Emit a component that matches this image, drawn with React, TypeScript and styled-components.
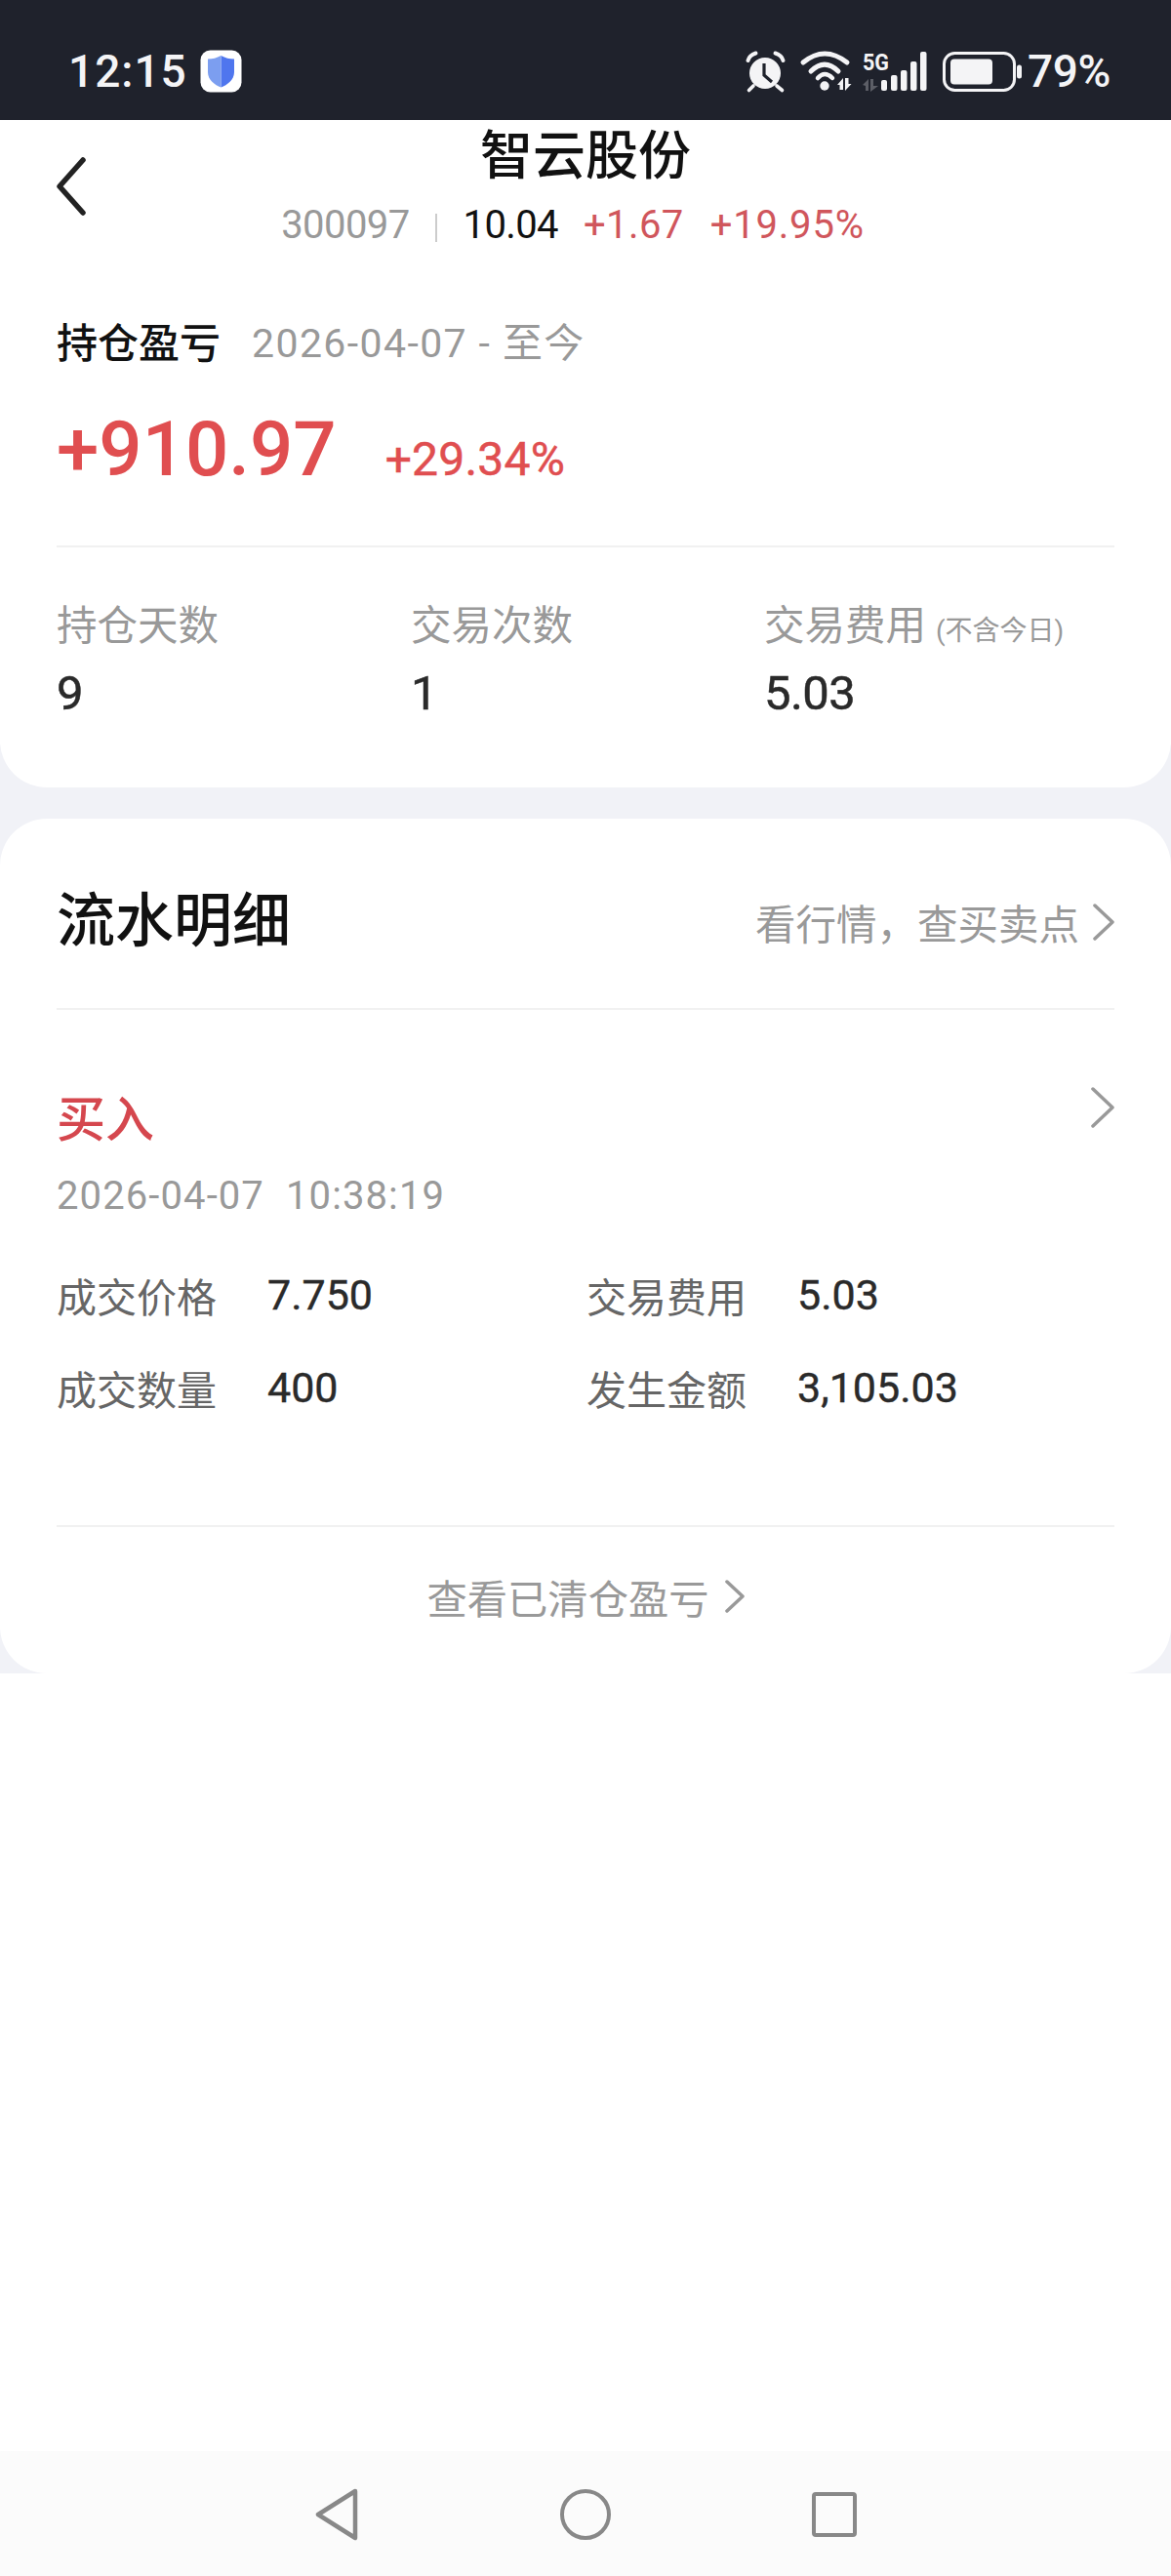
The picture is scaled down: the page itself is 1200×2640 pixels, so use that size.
import React from "react";
import styled, { createGlobalStyle } from "styled-components";

const Global = createGlobalStyle`
  html, body { margin: 0; padding: 0; background: #fff; }
  * { box-sizing: border-box; }
  body { font-family: Roboto, "Noto Sans CJK SC", sans-serif; }
`;

const Page = styled.div`
  width: 1200px;
  height: 2640px;
  display: flex;
  flex-direction: column;
  background: #fff;
  overflow: hidden;
`;

const StatusBar = styled.div`
  height: 123px;
  flex: none;
  background: #1f222c;
  color: #f4f4f6;
  display: flex;
  align-items: center;
  padding: 23px 62px 0 70px;
`;
const StatusText = styled.span`
  font-size: 46px;
  line-height: 50px;
  font-weight: 500;
  letter-spacing: 1px;
`;
const Spacer = styled.div`
  flex: 1;
`;
const ShieldBadge = styled.svg`
  margin-left: 13px;
  display: block;
`;
const StatusIcon = styled.svg<{ $ml: number }>`
  display: block;
  flex: none;
  overflow: visible;
  margin-left: ${(p) => p.$ml}px;
`;
const Percent = styled(StatusText)`
  margin-left: 5px;
  letter-spacing: -0.4px;
`;

const Content = styled.div`
  background: #f1f2f7;
  display: flex;
  flex-direction: column;
  gap: 32px;
  flex: none;
`;
const Card = styled.section<{ $top?: boolean }>`
  background: #fff;
  border-radius: ${(p) => (p.$top ? "0 0 48px 48px" : "48px")};
  padding: 0 58px;
`;

const Header = styled.header`
  display: grid;
  grid-template-columns: 1fr auto 1fr;
  height: 135px;
  margin: 0 -58px;
`;
const BackCell = styled.div`
  padding: 38px 0 0 58px;
`;
const HeaderCenter = styled.div`
  display: flex;
  flex-direction: column;
  align-items: center;
  padding-top: 3px;
`;
const Title = styled.h1`
  margin: 0;
  font-size: 54px;
  line-height: 70px;
  font-weight: 500;
  color: #111;
  height: 70px;
`;
const QuoteRow = styled.div`
  display: flex;
  align-items: center;
  margin-left: -26px;
  margin-top: 13px;
  height: 44px;
  font-size: 40px;
  line-height: 44px;
`;
const Quote = styled.span<{ $color: string; $ml: number; $ls: number }>`
  color: ${(p) => p.$color};
  margin-left: ${(p) => p.$ml}px;
  letter-spacing: ${(p) => p.$ls}px;
`;
const QuoteSep = styled.i`
  width: 2px;
  height: 29px;
  background: #ccc;
  margin: 5px 0 0 26px;
`;

const PnlHead = styled.div`
  display: flex;
  align-items: center;
  margin-top: 62px;
  height: 56px;
`;
const PnlLabel = styled.span`
  font-size: 42px;
  font-weight: 500;
  color: #111;
`;
const PnlDate = styled.span`
  margin-left: 32px;
  font-size: 41px;
  color: #999;
  letter-spacing: 1.4px;
`;
const PnlRow = styled.div`
  display: flex;
  align-items: baseline;
  margin-top: 43px;
  height: 84px;
`;
const PnlValue = styled.span`
  font-size: 78px;
  line-height: 84px;
  font-weight: 500;
  color: #e04e50;
`;
const PnlRate = styled.span`
  margin-left: 50px;
  font-size: 48px;
  font-weight: 400;
  color: #e04e50;
  letter-spacing: 0.2px;
  -webkit-text-stroke: 0.5px #e04e50;
`;
const Divider = styled.div<{ $mt: number }>`
  height: 2px;
  background: #f1f1f1;
  margin-top: ${(p) => p.$mt}px;
`;

const Stats = styled.div`
  display: grid;
  grid-template-columns: 363px 362px 1fr;
  padding: 51px 0 66px;
`;
const Stat = styled.div`
  display: flex;
  flex-direction: column;
`;
const StatLabel = styled.div`
  font-size: 41.5px;
  height: 60px;
  line-height: 60px;
  color: #999;
  white-space: nowrap;
`;
const StatNote = styled.small`
  font-size: 28px;
  line-height: 1;
  margin-left: 10px;
  color: #999;
`;
const StatValue = styled.div`
  font-size: 49px;
  line-height: 60px;
  margin-top: 9px;
  font-weight: 400;
  color: #2a2a2a;
  letter-spacing: -0.6px;
  -webkit-text-stroke: 0.5px #2a2a2a;
`;

const SectionHead = styled.div`
  display: flex;
  align-items: center;
  justify-content: space-between;
  height: 122px;
  margin-top: 45px;
`;
const SectionTitle = styled.h2`
  margin: 0;
  font-size: 60px;
  line-height: 80px;
  font-weight: 500;
  color: #111;
`;
const SectionLink = styled.div`
  display: flex;
  align-items: center;
  font-size: 41.5px;
  color: #999;
`;
const Chevron = styled.svg<{ $ml?: number }>`
  display: block;
  flex: none;
  margin-left: ${(p) => p.$ml ?? 0}px;
`;

const TradeHead = styled.div`
  display: flex;
  justify-content: space-between;
  margin-top: 79px;
  height: 68px;
`;
const TradeType = styled.span`
  font-size: 50px;
  line-height: 68px;
  font-weight: 500;
  color: #d5474e;
`;
const TradeTime = styled.div`
  font-size: 40px;
  line-height: 50px;
  margin-top: 19px;
  color: #999;
  white-space: pre;
  letter-spacing: 1.1px;
`;
const TradeGrid = styled.div`
  display: grid;
  grid-template-columns: 543px 1fr;
  row-gap: 39px;
  margin-top: 48px;
`;
const Field = styled.div`
  display: flex;
  align-items: center;
  height: 56px;
`;
const FieldLabel = styled.span`
  width: 216px;
  font-size: 41px;
  color: #666;
`;
const FieldValue = styled.span`
  font-size: 43px;
  font-weight: 400;
  color: #2a2a2a;
  -webkit-text-stroke: 0.4px #2a2a2a;
`;
const Footer = styled.div`
  display: flex;
  align-items: center;
  justify-content: center;
  height: 150px;
  padding-bottom: 8px;
  font-size: 41.3px;
  color: #999;
`;

const NavBar = styled.nav`
  margin-top: auto;
  height: 128px;
  flex: none;
  background: #fbfbfb;
  display: flex;
  align-items: center;
  justify-content: center;
  padding-top: 2px;
`;
const NavIcon = styled.svg<{ $ml: number }>`
  display: block;
  flex: none;
  margin-left: ${(p) => p.$ml}px;
`;

const FG = "#f4f4f6";

const Shield = () => (
  <ShieldBadge width="43" height="44" viewBox="0 0 43 44">
    <rect x="0.5" y="0.5" width="42" height="43" rx="10" fill="#fff" />
    <path d="M21.5 6 C26 8.5 30 9.5 35 9.5 V23 C35 31 28 36 21.5 38.5 Z" fill="#4f76ee" />
    <path d="M21.5 6 C17 8.5 13 9.5 8 9.5 V23 C8 31 15 36 21.5 38.5 Z" fill="#7c9ef0" />
  </ShieldBadge>
);

const Alarm = () => (
  <StatusIcon $ml={0} width="41" height="42" viewBox="0 0 41 42">
    <path d="M2.5 10 Q4 4.5 10.5 2.5" fill="none" stroke={FG} strokeWidth="4" strokeLinecap="round" />
    <path d="M38.5 10 Q37 4.5 30.5 2.5" fill="none" stroke={FG} strokeWidth="4" strokeLinecap="round" />
    <circle cx="20" cy="23" r="16" fill={FG} />
    <path d="M19 13 V25 L27 32" fill="none" stroke="#1f222c" strokeWidth="3.2" />
    <path d="M8 36 L3.5 40.5 M32 36 L37.5 40.5" stroke={FG} strokeWidth="3.6" strokeLinecap="round" />
  </StatusIcon>
);

const Wifi = () => (
  <StatusIcon $ml={15} width="52" height="41" viewBox="0 0 52 41">
    <path d="M3 11 Q25 -7 48 11" fill="none" stroke={FG} strokeWidth="5" strokeLinecap="round" />
    <path d="M11 20 Q25 6 39 20" fill="none" stroke={FG} strokeWidth="5" strokeLinecap="round" />
    <path d="M18 27 Q25 19 33 27" fill="none" stroke={FG} strokeWidth="4.5" strokeLinecap="round" />
    <circle cx="25" cy="35" r="4.7" fill={FG} />
    <path d="M38 34 L44 27 V39 H40.5 V34 Z M46 27 H49.5 V33 H52.5 L46 40 Z" fill={FG} />
  </StatusIcon>
);

const Signal = () => (
  <StatusIcon $ml={11} width="68" height="40" viewBox="0 0 68 40">
    <text x="1" y="18.5" fontFamily="Roboto" fontWeight="700" fontSize="24" fill={FG} textLength="27" lengthAdjust="spacingAndGlyphs">
      5G
    </text>
    <path d="M1 34 L7 28 V40 H4 V35 Z M9 28 H12 V35 L17 35 L9 41 Z" fill="#5c5e66" />
    <rect x="20" y="29" width="6" height="11" rx="2" fill={FG} />
    <rect x="30" y="24" width="6.5" height="16" rx="2" fill={FG} />
    <rect x="40" y="19" width="6.5" height="21" rx="2" fill={FG} />
    <rect x="50" y="10" width="6.5" height="30" rx="2" fill={FG} />
    <rect x="60" y="0" width="6.5" height="40" rx="2" fill={FG} />
  </StatusIcon>
);

const Battery = () => (
  <StatusIcon $ml={15} width="82" height="41" viewBox="0 0 82 41">
    <rect x="1.5" y="1.5" width="72" height="38" rx="11" fill="none" stroke={FG} strokeWidth="3" />
    <rect x="8" y="7.5" width="43" height="26" rx="4" fill={FG} />
    <rect x="76" y="13.5" width="5" height="14" rx="2.5" fill={FG} />
  </StatusIcon>
);

const Back = () => (
  <Chevron width="30" height="60" viewBox="0 0 30 60">
    <path d="M27 3 L3 30 L27 57" fill="none" stroke="#222" strokeWidth="5.5" strokeLinecap="round" strokeLinejoin="round" />
  </Chevron>
);

const Forward = ({ w, h, ml }: { w: number; h: number; ml?: number }) => (
  <Chevron $ml={ml} width={w} height={h} viewBox={`0 0 ${w} ${h}`}>
    <path
      d={`M2 2 L${w - 2} ${h / 2} L2 ${h - 2}`}
      fill="none"
      stroke="#999"
      strokeWidth="3.5"
      strokeLinecap="round"
      strokeLinejoin="round"
    />
  </Chevron>
);

export default function App() {
  return (
    <Page>
      <Global />
      <StatusBar>
        <StatusText>12:15</StatusText>
        <Shield />
        <Spacer />
        <Alarm />
        <Wifi />
        <Signal />
        <Battery />
        <Percent>79%</Percent>
      </StatusBar>
      <Content>
        <Card $top>
          <Header>
            <BackCell>
              <Back />
            </BackCell>
            <HeaderCenter>
              <Title>智云股份</Title>
              <QuoteRow>
                <Quote $color="#999" $ml={0} $ls={-0.6}>300097</Quote>
                <QuoteSep />
                <Quote $color="#111" $ml={27} $ls={-0.6}>10.04</Quote>
                <Quote $color="#d0565c" $ml={26} $ls={0.4}>+1.67</Quote>
                <Quote $color="#d0565c" $ml={27} $ls={0.8}>+19.95%</Quote>
              </QuoteRow>
            </HeaderCenter>
            <div />
          </Header>
          <PnlHead>
            <PnlLabel>持仓盈亏</PnlLabel>
            <PnlDate>2026-04-07 - 至今</PnlDate>
          </PnlHead>
          <PnlRow>
            <PnlValue>+910.97</PnlValue>
            <PnlRate>+29.34%</PnlRate>
          </PnlRow>
          <Divider $mt={56} />
          <Stats>
            <Stat>
              <StatLabel>持仓天数</StatLabel>
              <StatValue>9</StatValue>
            </Stat>
            <Stat>
              <StatLabel>交易次数</StatLabel>
              <StatValue>1</StatValue>
            </Stat>
            <Stat>
              <StatLabel>
                交易费用<StatNote>(不含今日)</StatNote>
              </StatLabel>
              <StatValue>5.03</StatValue>
            </Stat>
          </Stats>
        </Card>
        <Card>
          <SectionHead>
            <SectionTitle>流水明细</SectionTitle>
            <SectionLink>
              看行情，查买卖点
              <Forward w={22} h={38} ml={14} />
            </SectionLink>
          </SectionHead>
          <Divider $mt={27} />
          <TradeHead>
            <TradeType>买入</TradeType>
            <Forward w={24} h={42} />
          </TradeHead>
          <TradeTime>2026-04-07  10:38:19</TradeTime>
          <TradeGrid>
            <Field>
              <FieldLabel>成交价格</FieldLabel>
              <FieldValue>7.750</FieldValue>
            </Field>
            <Field>
              <FieldLabel>交易费用</FieldLabel>
              <FieldValue>5.03</FieldValue>
            </Field>
            <Field>
              <FieldLabel>成交数量</FieldLabel>
              <FieldValue>400</FieldValue>
            </Field>
            <Field>
              <FieldLabel>发生金额</FieldLabel>
              <FieldValue>3,105.03</FieldValue>
            </Field>
          </TradeGrid>
          <Divider $mt={113} />
          <Footer>
            查看已清仓盈亏
            <Forward w={20} h={34} ml={16} />
          </Footer>
        </Card>
      </Content>
      <NavBar>
        <NavIcon $ml={0} width="46" height="54" viewBox="0 0 46 54">
          <path d="M42 3 L4 27 L42 51 Z" fill="none" stroke="#888" strokeWidth="4.5" strokeLinejoin="round" />
        </NavIcon>
        <NavIcon $ml={206} width="52" height="52" viewBox="0 0 52 52">
          <circle cx="26" cy="26" r="24" fill="none" stroke="#888" strokeWidth="4" />
        </NavIcon>
        <NavIcon $ml={206} width="46" height="46" viewBox="0 0 46 46">
          <rect x="2" y="2" width="42" height="42" rx="2" fill="none" stroke="#888" strokeWidth="4" />
        </NavIcon>
      </NavBar>
    </Page>
  );
}
